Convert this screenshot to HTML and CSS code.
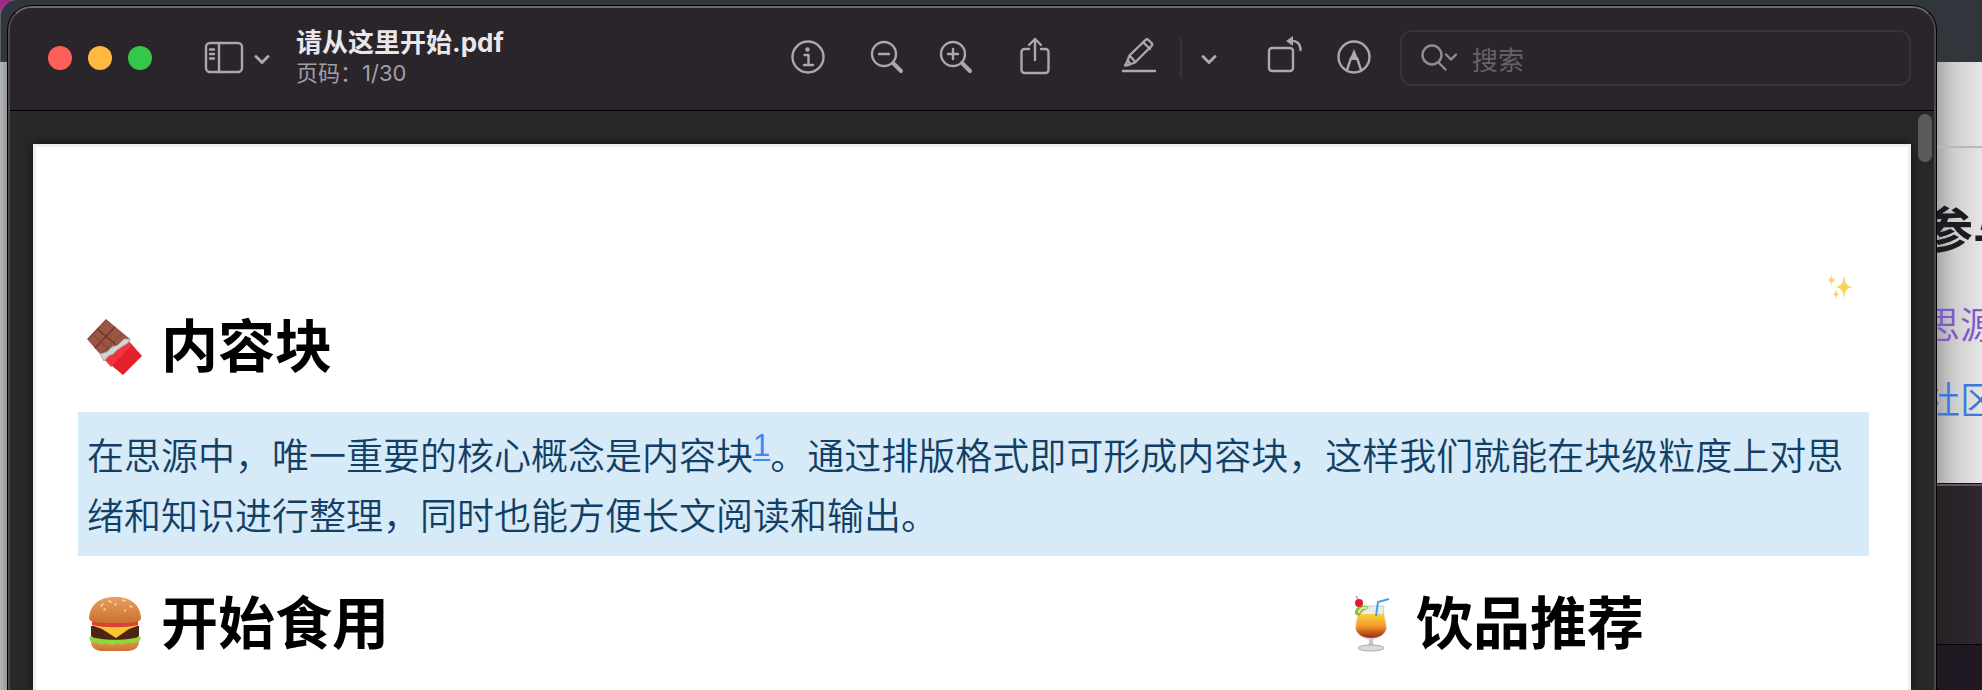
FILE: index.html
```html
<!DOCTYPE html>
<html lang="zh-CN">
<head>
<meta charset="utf-8">
<title>请从这里开始.pdf</title>
<link rel="stylesheet" href="styles.css">
</head>
<body>
<div class="desktop">
  <div class="back-window">
    <div class="back-bar"></div>
    <div class="back-page">
      <h2 class="back-title">参与</h2>
      <a class="back-link visited" href="#siyuan">思源</a>
      <a class="back-link" href="#community">社区</a>
    </div>
  </div>
  <div class="low-window"><div class="low-bar"></div></div>

  <main class="window">
    <header class="toolbar">
      <div class="lights">
        <button class="light close" aria-label="关闭"></button>
        <button class="light minimize" aria-label="最小化"></button>
        <button class="light zoom" aria-label="缩放"></button>
      </div>
      <button class="tool sidebar" aria-label="边栏">
        <svg width="66" height="34" viewBox="0 0 66 34"><rect x="2" y="2" width="36" height="29" rx="4"/><path d="M15 2V31M6 8.500h4M6 13h4M6 17.500h4"/><path class="bold" d="M52 15.500l6 6 6-6"/></svg>
      </button>
      <div class="heading">
        <h1 class="file-name">请从这里开始.pdf</h1>
        <p class="page-no">页码：1/30</p>
      </div>
      <div class="tools">
        <button class="tool info" aria-label="简介">
          <svg width="34" height="40" viewBox="0 0 34 40"><circle cx="17" cy="19" r="15.500"/><circle class="dot" cx="16.500" cy="11.500" r="2.200"/><path d="M13.500 17h4v10M13 27h9"/></svg>
        </button>
        <button class="tool zoom-out" aria-label="缩小">
          <svg width="34" height="40" viewBox="0 0 34 40"><circle cx="14" cy="16" r="12"/><path d="M9 16h10"/><path class="thick" d="M23.500 25.500l7.500 7.500"/></svg>
        </button>
        <button class="tool zoom-in" aria-label="放大">
          <svg width="34" height="40" viewBox="0 0 34 40"><circle cx="14" cy="16" r="12"/><path d="M9 16h10M14 11v10"/><path class="thick" d="M23.500 25.500l7.500 7.500"/></svg>
        </button>
        <button class="tool share" aria-label="共享">
          <svg width="34" height="40" viewBox="0 0 34 40"><path d="M12 11H7.500a3 3 0 0 0-3 3v18a3 3 0 0 0 3 3h21a3 3 0 0 0 3-3V14a3 3 0 0 0-3-3H24M18 22V1M12 7l6-6 6 6"/></svg>
        </button>
        <button class="tool pencil" aria-label="标记颜色">
          <svg width="38" height="40" viewBox="0 0 38 40"><path d="M3 33h32M5 27.500l3.500-.500L15 24.500 31.500 8c1-1.200 1-2 0-3l-3-3c-1-1-2-1-3 0L9.500 17.500 7 24zM23 4l7 7M9.500 17.500l6 6.500M8 23l2.500 3"/></svg>
        </button>
        <button class="tool more" aria-label="更多标记颜色">
          <svg width="18" height="40" viewBox="0 0 18 40"><path class="bold" d="M3 18.500l6 6 6-6"/></svg>
        </button>
        <button class="tool rotate" aria-label="旋转">
          <svg width="36" height="40" viewBox="0 0 36 40"><rect x="3" y="10" width="24" height="23" rx="3"/><path d="M24 3c7-1 10.500 3 10.500 9"/><path class="dot" d="M20 3l7-5v10z"/></svg>
        </button>
        <button class="tool markup" aria-label="标记">
          <svg width="34" height="40" viewBox="0 0 34 40"><circle cx="17" cy="19" r="15.500"/><path d="M10 32l4-12h6l4 12"/><path class="dot" d="M17 11l-4.500 11h9z"/></svg>
        </button>
      </div>
      <label class="search">
        <svg width="38" height="32" viewBox="0 0 38 32"><circle cx="12" cy="13" r="9.500"/><path d="M18.500 20.500l7 7M26 12.500l5 5 5-5"/></svg>
        <input class="search-input" type="search" placeholder="搜索" aria-label="搜索">
      </label>
    </header>

    <div class="viewer">
      <article class="page">
        <svg class="sparkle" width="26" height="26" viewBox="0 0 26 26" aria-hidden="true"><g fill="#fcd45c"><path d="M17 1c1 8 2 11 9 12-7 1-8 4-9 12-1-8-2-11-9-12 7-1 8-4 9-12z"/><path d="M4.500 0c.500 4 1 5 4 6-3 1-3.500 2-4 6-.500-4-1-5-4-6 3-1 3.500-2 4-6zM9 15c.500 3.500 1 4.500 3.500 5.200C10 21 9.500 22 9 25.500c-.500-3.500-1-4.500-3.500-5.300C8 19.500 8.500 18.500 9 15z"/></g></svg>
        <h2 class="section-title">
          <svg class="emoji" width="56" height="56" viewBox="0 0 56 56" aria-hidden="true">
            <path d="M0 20L19 0l24 20-26 17-5-3z" fill="#9a5643"/>
            <path d="M10 10l24 20M28 8L8 29" fill="none" stroke="#6f3729" stroke-width="1.500"/>
            <path d="M19 1L1 20M35 14L15 34M5 15l20 18" fill="none" stroke="#7d4232"/>
            <path d="M18 41l22-21 15 17-19 19z" fill="#e3202c"/>
            <path d="M18 41l22-21 5 6-21 22z" fill="#f0343c"/>
            <path d="M13 35l7-2 5-5 6-2 6-6 6 0-2 4-5 3-6 4-4 4-5 2-4 5z" fill="#d8d4d2" stroke="#a9a3a1"/>
          </svg>
          内容块
        </h2>
        <blockquote class="callout">在思源中，唯一重要的核心概念是内容块<a class="note" href="#note-1">1</a>。通过排版格式即可形成内容块，这样我们就能在块级粒度上对思绪和知识进行整理，同时也能方便长文阅读和输出。</blockquote>
        <div class="columns">
          <h2 class="section-title">
            <svg class="emoji" width="56" height="56" viewBox="0 0 56 56" aria-hidden="true">
              <defs><linearGradient id="bun" x2="0" y2="1"><stop stop-color="#e8a060"/><stop offset="1" stop-color="#c9712f"/></linearGradient></defs>
              <path d="M4 43h48c1 7-3 12-12 12H15C7 55 3 50 4 43z" fill="url(#bun)"/>
              <path d="M4 30h48v9c0 4-8 7-24 7S4 43 4 39z" fill="#4b2616"/>
              <path d="M3 40c8 5 42 5 50 0 2 3-1 7-4 5-3 3-6 2-9 1-3 3-7 3-10 1-3 2-7 2-10 0-4 2-8 2-10-1-4 1-9 0-7-6z" fill="#8bdc36"/>
              <path d="M4 29h49l-11 4-13 9-14-9z" fill="#fbc530"/>
              <path d="M5 24h46v5c-12 3-34 3-46 0z" fill="#db4136"/>
              <path d="M2 22C3 8 13 1 28 1s25 7 26 21c0 4-6 5-26 5S2 26 2 22z" fill="url(#bun)"/>
              <path d="M14 10l2-2M22 5l2 1M28 9l1-1M36 4l2 1M38 14v1M43 10l2 1M18 13l-1 1" stroke="#f7dda2" stroke-width="1.500" stroke-linecap="round"/>
            </svg>
            开始食用
          </h2>
          <h2 class="section-title">
            <svg class="emoji" width="56" height="56" viewBox="0 0 56 56" aria-hidden="true">
              <defs><linearGradient id="juice" x2="0" y2="1"><stop stop-color="#fbd23c"/><stop offset=".500" stop-color="#f59a2a"/><stop offset="1" stop-color="#9c2415"/></linearGradient></defs>
              <path d="M16 10h26c-2 10 3 16 2 23-1 5-7 10-15 10s-14-5-15-10c-1-7 4-13 2-23z" fill="#e9ecea" stroke="#cbd0cf"/>
              <path d="M16 18h26c0 6 2 9 2 15-1 5-7 9-15 9s-14-4-15-9c0-6 2-9 2-15z" fill="url(#juice)"/>
              <path d="M27 43h4v4l2 3h-8l2-3z" fill="#c6c9c8"/>
              <ellipse cx="29" cy="52" rx="13" ry="3" fill="#d9dcdb" stroke="#aaaeac"/>
              <path d="M13 18c-1-8 9-11 14-6l-6 3-4 5z" fill="#8fbb3c"/><path d="M17 17c0-4 4-6 8-5" stroke="#dcebab" stroke-width="2" fill="none"/>
              <circle cx="17" cy="7" r="4" fill="#d51f33"/><path d="M17 4l-3-4" stroke="#a05a47"/>
              <path d="M34 20l2-14 11-3" fill="none" stroke="#43a5e0" stroke-width="2"/>
            </svg>
            饮品推荐
          </h2>
        </div>
      </article>
      <div class="scroll-track"><div class="scroll-thumb"></div></div>
    </div>
  </main>
</div>
</body>
</html>
```

FILE: styles.css
```css
* { box-sizing: border-box; }

body {
  margin: 0;
  font-family: "Liberation Sans", "Noto Sans CJK SC", sans-serif;
}

h1, h2, p, blockquote { margin: 0; }

button {
  padding: 0;
  border: 0;
  background: none;
}

.desktop {
  position: relative;
  display: flex;
  height: 100vh;
  padding: 6px 46px 0 8px;
  overflow: hidden;
  background: #a0268c;
}

/* windows behind */
.back-window {
  position: absolute;
  inset: 0;
  border-top-left-radius: 16px;
  overflow: hidden;
  background: linear-gradient(90deg, #b4b6b8 0, #949698 8px, #a0a0a2 50%, #a8a8a8 calc(100% - 45px), #cecece calc(100% - 28px), #e6e6e6 100%);
}

.back-bar {
  height: 62px;
  border-left: 1px solid #5a5f66;
  border-top-left-radius: 16px;
  background: #31353c;
}

.back-page {
  display: flex;
  flex-direction: column;
  align-items: flex-end;
  height: 421px;
  margin: 84px 0 0 50%;
  border-top: 2px solid #b8b8b8;
}

.back-title {
  width: 58px;
  margin-top: 48px;
  font-size: 49px;
  line-height: 70px;
  white-space: nowrap;
  color: #1b1c1f;
}

.back-link {
  width: 59px;
  margin-top: 36px;
  font-size: 37px;
  font-weight: 350;
  line-height: 50px;
  white-space: nowrap;
  text-decoration: none;
  color: #3a78dc;
}

.back-link + .back-link { margin-top: 25px; }
.back-link.visited { color: #8158c8; }

.low-window {
  position: absolute;
  right: 0;
  bottom: 0;
  width: 60px;
  height: 207px;
  border-top: 1px solid #111;
  background: #1f1722;
}

.low-bar {
  height: 161px;
  border-top: 2px solid #5e5760;
  border-bottom: 1px solid #000;
  background: linear-gradient(90deg, #272024 20px, #302733);
}

/* front window */
.window {
  position: relative;
  display: flex;
  flex: 1;
  flex-direction: column;
  min-width: 0;
  border: 2px solid #4c4a4d;
  border-top-color: #6c696e;
  border-bottom: 0;
  border-radius: 24px 24px 0 0;
  box-shadow: 0 0 0 1px #000;
  overflow: hidden;
  background: #282828;
}

.toolbar {
  display: flex;
  align-items: center;
  flex: none;
  height: 103px;
  padding: 0 23px 2px 38px;
  border-bottom: 1px solid #000;
  background: #2a252b;
}

.lights {
  display: flex;
  gap: 16px;
}

.light {
  width: 24px;
  height: 24px;
  border-radius: 50%;
}

.close { background: #ff5f5a; }
.minimize { background: #ffb940; }
.zoom { background: #34c748; }

.tool svg, .search svg {
  display: block;
  overflow: visible;
  fill: none;
  stroke: #aca6ad;
  stroke-width: 2.4;
  stroke-linecap: round;
  stroke-linejoin: round;
}

.tool .bold { stroke-width: 3; }
.tool .thick { stroke-width: 4; }
.tool .dot { fill: #aca6ad; stroke: none; }

.sidebar { margin-left: 52px; }

.heading {
  flex: 1;
  margin-left: 26px;
  white-space: nowrap;
}

.file-name {
  font-family: Inter, "Noto Sans CJK SC", sans-serif;
  font-size: 26px;
  line-height: 30px;
  color: #e9e7e9;
}

.page-no {
  font-family: Inter, "Noto Sans CJK SC", sans-serif;
  font-size: 22px;
  line-height: 30px;
  color: #a39ea4;
}

.tools {
  display: flex;
  align-items: center;
}

.zoom-out { margin-left: 45px; }
.zoom-in { margin-left: 35px; }
.share { margin-left: 44px; }
.pencil { margin-left: 69px; }

.more {
  margin-left: 22px;
  padding-left: 18px;
  border-left: 2px solid #38333a;
}

.rotate { margin-left: 48px; }
.markup { margin-left: 35px; }

.search {
  display: flex;
  align-items: center;
  gap: 14px;
  width: 511px;
  height: 56px;
  margin-left: 29px;
  padding: 0 18px;
  border: 2px solid #38333a;
  border-radius: 12px;
}

.search svg { stroke: #918c92; }

.search-input {
  flex: 1;
  min-width: 0;
  padding: 6px 0 0;
  border: 0;
  outline: 0;
  background: none;
  font: 26px/36px "Liberation Sans", "Noto Sans CJK SC", sans-serif;
  color: #e9e7e9;
}

.search-input::placeholder { color: #666167; }

.viewer {
  display: flex;
  flex: 1;
  min-height: 0;
  padding: 33px 0 0 23px;
}

.page {
  display: flex;
  flex: 1;
  flex-direction: column;
  min-width: 0;
  padding: 127px 39px 0 42px;
  border: 3px solid #f0f0f0;
  border-bottom: 0;
  box-shadow: 0 0 8px #111;
  background: #fff;
}

.sparkle {
  flex: none;
  align-self: flex-end;
  margin-right: 16px;
}

.section-title {
  display: flex;
  align-items: center;
  gap: 18px;
  padding-left: 9px;
  font-size: 57px;
  line-height: 84px;
  color: #000;
}

.emoji { flex: none; }

.callout {
  margin: 23px 0 26px;
  padding: 16px 9px 8px;
  font-size: 37px;
  font-weight: 350;
  line-height: 60px;
  background: #d7eaf7;
  color: #123f66;
}

.page > .section-title { margin-top: 5px; }

.note {
  font-size: 31px;
  font-weight: 400;
  line-height: 0;
  vertical-align: 14px;
  text-decoration: underline;
  text-decoration-thickness: 2px;
  text-underline-offset: 3px;
  color: #4285f4;
}

.columns {
  display: grid;
  grid-template-columns: 1255fr 536fr;
}

.scroll-track {
  width: 23px;
  margin-top: -30px;
  padding-left: 7px;
}

.scroll-thumb {
  width: 14px;
  height: 48px;
  border-radius: 7px;
  background: #5a5a5a;
}
```
